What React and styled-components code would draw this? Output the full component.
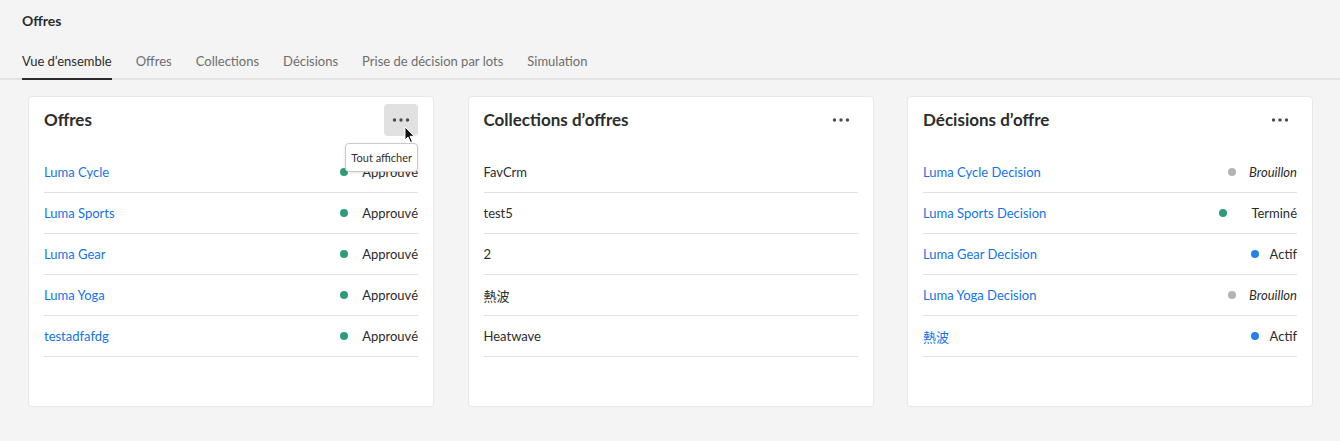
import React from "react";
import styled, { createGlobalStyle } from "styled-components";

const GlobalStyle = createGlobalStyle`
  body {
    margin: 0;
    background: #f4f4f4;
    font-family: Lato, "Noto Sans", "Noto Sans CJK JP", sans-serif;
    color: #2c2c2c;
  }
`;

const offers = [
  { name: "Luma Cycle", status: "approved" },
  { name: "Luma Sports", status: "approved" },
  { name: "Luma Gear", status: "approved" },
  { name: "Luma Yoga", status: "approved" },
  { name: "testadfafdg", status: "approved" },
];

const collections = ["FavCrm", "test5", "2", "熱波", "Heatwave"];

const decisions = [
  { name: "Luma Cycle Decision", status: "draft" },
  { name: "Luma Sports Decision", status: "done" },
  { name: "Luma Gear Decision", status: "live" },
  { name: "Luma Yoga Decision", status: "draft" },
  { name: "熱波", status: "live" },
];

const statuses = {
  approved: { label: "Approuvé", color: "#2d9d78", gap: 14 },
  draft: { label: "Brouillon", color: "#b3b3b3", gap: 13, italic: true },
  done: { label: "Terminé", color: "#2d9d78", gap: 24 },
  live: { label: "Actif", color: "#2680eb", gap: 11 },
};

function App() {
  return (
    <Page>
      <GlobalStyle />
      <Header>
        <PageTitle>Offres</PageTitle>
        <Tabs>
          <Tab $active>Vue d’ensemble</Tab>
          <Tab>Offres</Tab>
          <Tab>Collections</Tab>
          <Tab>Décisions</Tab>
          <Tab>Prise de décision par lots</Tab>
          <Tab>Simulation</Tab>
        </Tabs>
      </Header>
      <Cards>
        <Card>
          <CardHead>
            <CardTitle>Offres</CardTitle>
            <MoreWrap>
              <MoreButton $hover>
                <Dots />
              </MoreButton>
              <Cursor viewBox="0 0 12 18">
                <path d="M1 1 L1 14 L4 11 L6.5 16.5 L8.5 15.6 L6 10.3 L10.2 10.3 Z" fill="#111" stroke="#fff" strokeWidth="1" />
              </Cursor>
              <Tooltip>Tout afficher</Tooltip>
            </MoreWrap>
          </CardHead>
          <List>
            {offers.map((o) => (
              <Row key={o.name}>
                <LinkText>{o.name}</LinkText>
                <Status s={o.status} />
              </Row>
            ))}
          </List>
        </Card>
        <Card>
          <CardHead>
            <CardTitle>Collections d’offres</CardTitle>
            <MoreButton>
              <Dots />
            </MoreButton>
          </CardHead>
          <List>
            {collections.map((c) => (
              <Row key={c}>
                <PlainText>{c}</PlainText>
              </Row>
            ))}
          </List>
        </Card>
        <Card>
          <CardHead>
            <CardTitle>Décisions d’offre</CardTitle>
            <MoreButton>
              <Dots />
            </MoreButton>
          </CardHead>
          <List>
            {decisions.map((d, i) => (
              <Row key={i}>
                <LinkText>{d.name}</LinkText>
                <Status s={d.status} />
              </Row>
            ))}
          </List>
        </Card>
      </Cards>
    </Page>
  );
}

function Dots() {
  return (
    <svg width="18" height="4" viewBox="0 0 18 4">
      <circle cx="2.5" cy="2" r="1.7" fill="#4b4b4b" />
      <circle cx="9" cy="2" r="1.7" fill="#4b4b4b" />
      <circle cx="15.5" cy="2" r="1.7" fill="#4b4b4b" />
    </svg>
  );
}

function Status({ s }) {
  const st = statuses[s];
  return (
    <StatusWrap $gap={st.gap}>
      <Dot $color={st.color} />
      <StatusLabel $italic={st.italic}>{st.label}</StatusLabel>
    </StatusWrap>
  );
}

export default App;

const Page = styled.div`
  min-height: 441px;
`;

const Header = styled.div`
  padding: 12px 22px 0;
  border-bottom: 2px solid #e3e3e3;
`;

const PageTitle = styled.div`
  font-size: 14px;
  font-weight: 700;
  line-height: 18px;
  color: #2c2c2c;
`;

const Tabs = styled.div`
  display: flex;
  gap: 24px;
  margin-top: 22px;
`;

const Tab = styled.div`
  font-size: 13px;
  line-height: 18px;
  padding-bottom: 8px;
  margin-bottom: -2px;
  color: ${(p) => (p.$active ? "#2c2c2c" : "#6e6e6e")};
  border-bottom: 2px solid ${(p) => (p.$active ? "#2c2c2c" : "transparent")};
`;

const Cards = styled.div`
  display: grid;
  grid-template-columns: repeat(3, 406px);
  gap: 33.5px;
  padding: 16px 0 0 28px;
`;

const Card = styled.div`
  background: #fff;
  border: 1px solid #e8e8e8;
  border-radius: 4px;
  height: 311px;
  padding: 0 15px;
  box-sizing: border-box;
`;

const CardHead = styled.div`
  display: flex;
  align-items: center;
  justify-content: space-between;
  height: 45px;
`;

const CardTitle = styled.div`
  font-size: 17px;
  font-weight: 700;
  color: #2c2c2c;
`;

const MoreWrap = styled.div`
  position: relative;
`;

const MoreButton = styled.div`
  width: 34px;
  height: 32px;
  border-radius: 4px;
  display: flex;
  align-items: center;
  justify-content: center;
  background: ${(p) => (p.$hover ? "#e1e1e1" : "transparent")};
`;

const Cursor = styled.svg`
  position: absolute;
  left: 20px;
  top: 22px;
  width: 12px;
  height: 18px;
`;

const Tooltip = styled.div`
  position: absolute;
  top: 39px;
  right: 0;
  white-space: nowrap;
  background: #fff;
  border: 1px solid #cacaca;
  border-radius: 4px;
  font-size: 11px;
  line-height: 27px;
  padding: 0 5px;
  color: #323232;
  box-shadow: 0 1px 3px rgba(0, 0, 0, 0.12);
`;

const List = styled.div`
  margin-top: 10px;
`;

const Row = styled.div`
  display: flex;
  align-items: center;
  justify-content: space-between;
  height: 40px;
  border-bottom: 1px solid #e1e1e1;
`;

const LinkText = styled.span`
  font-size: 13px;
  color: #1473e6;
`;

const PlainText = styled.span`
  font-size: 13px;
  color: #2c2c2c;
`;

const StatusWrap = styled.div`
  display: flex;
  align-items: center;
  gap: ${(p) => p.$gap}px;
`;

const Dot = styled.span`
  width: 8px;
  height: 8px;
  border-radius: 50%;
  background: ${(p) => p.$color};
`;

const StatusLabel = styled.span`
  font-size: 13px;
  color: #2c2c2c;
  font-style: ${(p) => (p.$italic ? "italic" : "normal")};
`;
